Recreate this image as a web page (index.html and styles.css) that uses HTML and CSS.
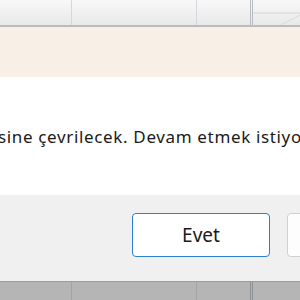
FILE: index.html
```html
<!doctype html>
<html>
<head>
<link rel="stylesheet" href="styles.css">
</head>
<body>
<div class="sheet top">
	<div class="cell c1"></div>
	<div class="cell c2"></div>
	<div class="cell c3"></div>
	<div class="cell c4">
		<svg width="47" height="25" viewBox="0 0 47 25"><line x1="0" y1="13" x2="47" y2="13" stroke="#d4d4dc" stroke-width="1"/><line x1="28" y1="25" x2="47" y2="15" stroke="#d8d8e0" stroke-width="1"/></svg>
	</div>
</div>
<div class="dialog">
	<div class="band"></div>
	<div class="body">
		<p class="msg">sine çevrilecek. Devam etmek istiyor musunuz?</p>
	</div>
	<div class="footer">
		<button class="btn primary">Evet</button>
		<button class="btn">Hayır</button>
	</div>
</div>
<div class="sheet bottom">
	<div class="cell c1"></div>
	<div class="cell c2"></div>
	<div class="cell c3"></div>
	<div class="cell c4"></div>
</div>
</body>
</html>
```
FILE: styles.css
```css
html, body {
	margin: 0;
	padding: 0;
	overflow: hidden;
	height: 300px;
	font-family: "Noto Sans", "Open Sans", sans-serif;
}
.sheet {
	display: flex;
}
.sheet.top {
	height: 25px;
	background: linear-gradient(#f8f8f8, #e9e9e9);
	border-bottom: 2px solid #bcbcbc;
}
.sheet.bottom {
	height: 18px;
	background: #b5b5b5;
	border-top: 1px solid #9c9c9c;
}
.cell {
	flex: none;
}
.c1 {
	width: 71px;
	border-right: 1px solid #d6d6de;
}
.c2 {
	width: 124px;
	border-right: 1px solid #d6d6de;
}
.c3 {
	width: 53px;
	border-right: 3px double #b8bac4;
}
.c4 {
	flex: 1;
}
.c4 svg {
	display: block;
}
.sheet.bottom .c1,
.sheet.bottom .c2 {
	border-right-color: #a2a2a8;
}
.sheet.bottom .c3 {
	border-right-color: #8e9098;
}
.band {
	height: 50px;
	background: #f8efe6;
}
.body {
	height: 118px;
	background: #fff;
	overflow: hidden;
}
.msg {
	margin: 0 0 0 -2px;
	padding-top: 48px;
	white-space: nowrap;
	font-size: 17px;
	letter-spacing: 0.65px;
	line-height: 24px;
	color: #1a1a1a;
}
.footer {
	height: 86px;
	background: #f0f0f0;
	display: flex;
	gap: 17px;
	padding: 18px 0 0 132px;
	box-sizing: border-box;
	overflow: hidden;
}
.btn {
	flex: none;
	width: 138px;
	height: 44px;
	background: #fdfdfd;
	border: 1px solid #d0d0d0;
	border-radius: 4px;
	font-family: inherit;
	font-size: 19px;
	color: #1a1a1a;
}
.btn.primary {
	border: 1px solid #2a7fd4;
	background: #fff;
}
```
